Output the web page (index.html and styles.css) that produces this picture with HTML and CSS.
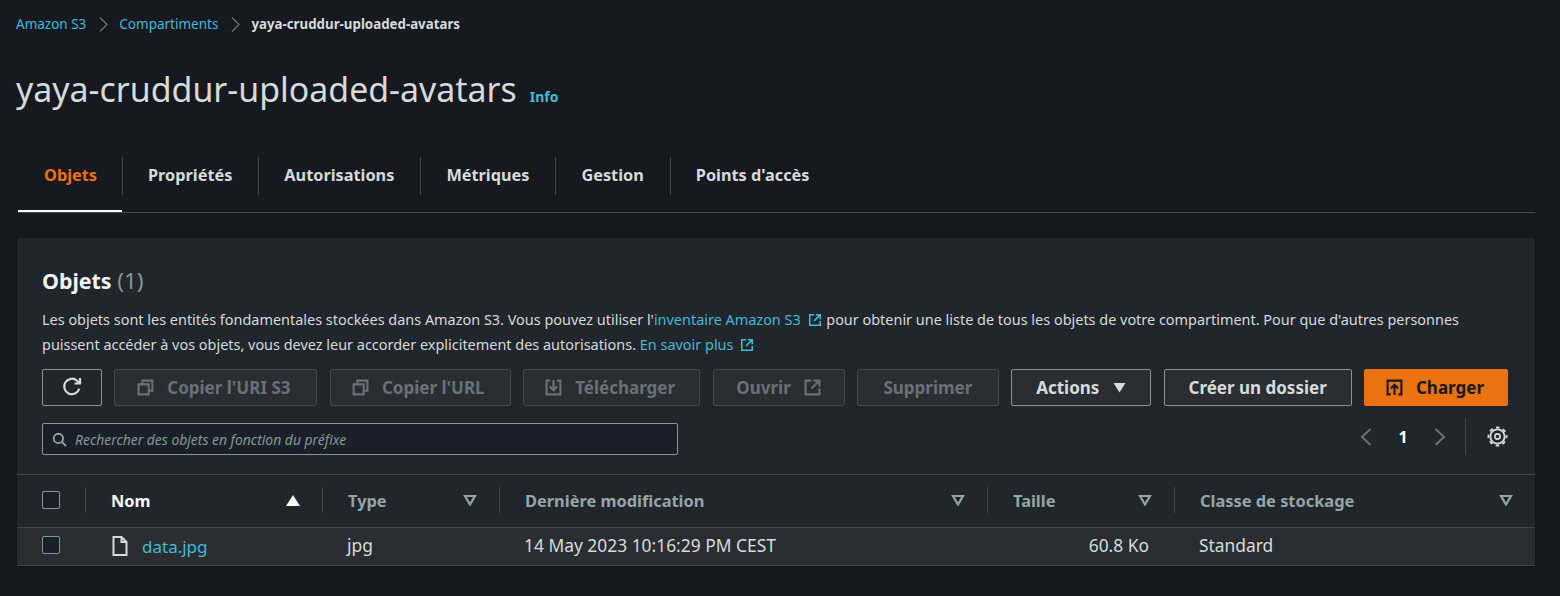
FILE: index.html
```html
<!DOCTYPE html>
<html lang="fr">
<head>
  <meta charset="utf-8" />
  <title>yaya-cruddur-uploaded-avatars</title>
  <link rel="stylesheet" href="styles.css">
</head>
<body>
  <nav class="crumbs">
    <a href="#">Amazon S3</a>
    <svg class="crumb-sep" viewBox="0 0 9 15"><path d="M1 .5l7 7-7 7"/></svg>
    <a href="#">Compartiments</a>
    <svg class="crumb-sep" viewBox="0 0 9 15"><path d="M1 .5l7 7-7 7"/></svg>
    <span class="crumb-current">yaya-cruddur-uploaded-avatars</span>
  </nav>

  <header class="page-head">
    <h1>yaya-cruddur-uploaded-avatars</h1>
    <a href="#" class="info">Info</a>
  </header>

  <ul class="tabs">
    <li class="tab tab-active"><span>Objets</span></li>
    <li class="tab"><span>Propriétés</span></li>
    <li class="tab"><span>Autorisations</span></li>
    <li class="tab"><span>Métriques</span></li>
    <li class="tab"><span>Gestion</span></li>
    <li class="tab"><span>Points d'accès</span></li>
  </ul>

  <section class="panel">
    <div class="panel-head">
      <h2>Objets <span class="count">(1)</span></h2>
      <p class="desc">Les objets sont les entités fondamentales stockées dans Amazon S3. Vous pouvez utiliser l'<a href="#">inventaire Amazon S3 <svg class="ext" viewBox="0 0 16 16"><path d="M7 2H2v12h12V9M9 2h5v5M14 2L7 9"/></svg></a> pour obtenir une liste de tous les objets de votre compartiment. Pour que d'autres personnes puissent accéder à vos objets, vous devez leur accorder explicitement des autorisations. <a href="#">En savoir plus <svg class="ext" viewBox="0 0 16 16"><path d="M7 2H2v12h12V9M9 2h5v5M14 2L7 9"/></svg></a></p>

      <div class="actions">
        <button class="btn btn-refresh"><svg class="ico" viewBox="0 0 20 20"><path d="M16.6 11.5A7 7 0 1 1 14.6 4.3L17 6.5M17.3 1.8v5h-5"/></svg></button>
        <button class="btn btn-uri" disabled><svg class="ico" viewBox="0 0 16 16"><path d="M5 5V1.500h9.500V11H11M1.500 5H11v9.500H1.500z"/></svg>Copier l'URI S3</button>
        <button class="btn btn-url" disabled><svg class="ico" viewBox="0 0 16 16"><path d="M5 5V1.500h9.500V11H11M1.500 5H11v9.500H1.500z"/></svg>Copier l'URL</button>
        <button class="btn btn-dl" disabled><svg class="ico" viewBox="0 0 16 16"><path d="M4.500 1.500h-3v13h13v-13h-3M8 1v9M4.500 7L8 10.500 11.500 7"/></svg>Télécharger</button>
        <button class="btn btn-open" disabled>Ouvrir<svg class="ico" viewBox="0 0 16 16"><path d="M7 1.500H1.500v13h13V9M9 1.500h5.500V7M14.500 1.500L7 9"/></svg></button>
        <button class="btn btn-del" disabled>Supprimer</button>
        <button class="btn btn-on btn-actions">Actions<svg class="caret" viewBox="0 0 14 12"><path d="M0.500 1h13L7 11.500z"/></svg></button>
        <button class="btn btn-on btn-folder">Créer un dossier</button>
        <button class="btn btn-primary"><svg class="ico" viewBox="0 0 16 16"><path d="M4.500 14.500h-3v-13h13v13h-3M8 15V6M4.500 9L8 5.500 11.500 9"/></svg>Charger</button>
      </div>

      <div class="filter-row">
        <div class="search">
          <svg class="search-ico" viewBox="0 0 16 16"><circle cx="6.800" cy="6.800" r="5"/><path d="M10.500 10.500L15 15"/></svg>
          <span>Rechercher des objets en fonction du préfixe</span>
        </div>
        <div class="pager">
          <svg class="pg-arrow" viewBox="0 0 12 20"><path d="M10.500 2L2 10l8.500 8"/></svg>
          <span class="pg-num">1</span>
          <svg class="pg-arrow" viewBox="0 0 12 20"><path d="M1.500 2L10 10l-8.500 8"/></svg>
          <span class="pg-div"></span>
          <svg class="gear" viewBox="0 0 20 20"><circle class="gear-teeth" cx="10" cy="10" r="8.600"/><circle class="gear-ring" cx="10" cy="10" r="6.800"/><circle class="gear-hub" cx="10" cy="10" r="2.500"/></svg>
        </div>
      </div>
    </div>

    <table class="objects">
      <colgroup>
        <col class="c-check"><col class="c-name"><col class="c-type"><col class="c-date"><col class="c-size"><col>
      </colgroup>
      <thead>
        <tr>
          <th><span class="th-in"><span class="check"></span></span></th>
          <th class="th-sorted"><span class="th-in"><span>Nom</span><svg class="sort" viewBox="0 0 14 11"><path d="M7 0l7 11H0z"/></svg></span></th>
          <th><span class="th-in"><span>Type</span><svg class="sort" viewBox="0 0 14 11"><path d="M2 1h10L7 9.500z"/></svg></span></th>
          <th><span class="th-in"><span>Dernière modification</span><svg class="sort" viewBox="0 0 14 11"><path d="M2 1h10L7 9.500z"/></svg></span></th>
          <th><span class="th-in"><span>Taille</span><svg class="sort" viewBox="0 0 14 11"><path d="M2 1h10L7 9.500z"/></svg></span></th>
          <th><span class="th-in"><span>Classe de stockage</span><svg class="sort" viewBox="0 0 14 11"><path d="M2 1h10L7 9.500z"/></svg></span></th>
        </tr>
      </thead>
      <tbody>
        <tr>
          <td><span class="check"></span></td>
          <td class="td-name"><svg class="file" viewBox="0 0 16 20"><path d="M1.500 1h8l5 5v13h-13zM9.500 1v5h5"/></svg><a href="#">data.jpg</a></td>
          <td>jpg</td>
          <td>14 May 2023 10:16:29 PM CEST</td>
          <td class="td-size">60.8 Ko</td>
          <td>Standard</td>
        </tr>
      </tbody>
    </table>
  </section>
</body>
</html>
```
FILE: styles.css
```css
body {
  margin: 0;
  height: 596px;
  overflow: hidden;
  padding: 0 25px 0 17px;
  box-sizing: border-box;
  background-color: #16191f;
  color: #d5dbdb;
  font-family: 'Noto Sans', sans-serif;
  font-size: 14px;
}
a {
  color: #44b9d6;
  text-decoration: none;
}
svg {
  fill: none;
  stroke: currentColor;
  stroke-width: 2;
}

/* breadcrumbs */
.crumbs {
  display: flex;
  align-items: center;
  height: 48px;
  margin-left: -1px;
  font-size: 13.500px;
}
.crumb-sep {
  width: 9px;
  height: 15px;
  margin: 0 11px 0 13px;
  color: #687078;
  stroke-width: 1.400;
}
.crumb-current {
  font-weight: 700;
  font-size: 13.300px;
}

/* title */
.page-head {
  display: flex;
  align-items: baseline;
  height: 109px;
  box-sizing: border-box;
  padding-top: 18px;
  margin-left: -1px;
}
h1 {
  margin: 0;
  font-size: 33.900px;
  font-weight: 400;
  line-height: 46px;
}
.info {
  margin-left: 13px;
  font-size: 14px;
  font-weight: 700;
}

/* tabs */
.tabs {
  display: flex;
  list-style: none;
  margin: 0 0 25px 1px;
  padding: 0;
  height: 55px;
  border-bottom: 1px solid #414750;
}
.tab {
  position: relative;
  padding: 0 26px;
  height: 55px;
  box-sizing: border-box;
  font-size: 16.300px;
  font-weight: 700;
  color: #d5dbdb;
}
.tab span {
  display: flex;
  align-items: center;
  height: 36px;
}
.tab + .tab::before {
  content: "";
  position: absolute;
  left: 0;
  top: 0;
  height: 38px;
  border-left: 1px solid #414750;
}
.tab-active {
  padding-right: 25px;
  color: #ec7211;
  border-bottom: 2px solid #fafafa;
}

/* panel */
.panel {
  background-color: #21252c;
  border-bottom: 1px solid #414750;
  box-shadow: 0 0 1px #000;
}
.panel-head {
  padding: 26px 27px 19px 25px;
}
h2 {
  margin: 0;
  font-size: 21.400px;
  line-height: 34px;
  font-weight: 700;
  color: #f2f3f3;
}
.count {
  font-size: 22.500px;
  font-weight: 400;
  color: #879596;
}
.desc {
  margin: 9px 0 12px;
  font-size: 14.450px;
  line-height: 25px;
}
.ext {
  width: 14px;
  height: 14px;
  vertical-align: -2px;
  stroke-width: 1.800;
  margin: 0 1px 0 3px;
}

/* toolbar */
.actions {
  display: flex;
  justify-content: space-between;
}
.btn {
  display: flex;
  align-items: center;
  justify-content: center;
  gap: 13px;
  height: 37px;
  padding: 0 0 1px;
  box-sizing: border-box;
  border-radius: 2px;
  border: 1px solid #414750;
  background-color: #2a2e33;
  color: #687078;
  font-family: inherit;
  font-size: 17px;
  font-weight: 700;
}
.ico {
  width: 17px;
  height: 17px;
}
.btn-refresh { width: 60px; border-color: #879596; color: #d5dbdb; background: transparent; }
.btn-refresh .ico { width: 22px; height: 22px; }
.btn-uri { width: 203px; padding-right: 4px; }
.btn-url { width: 181px; padding-right: 4px; }
.btn-dl { width: 177px; padding-right: 3px; }
.btn-open { width: 132px; }
.btn-del { width: 142px; }
.btn-on { border-color: #879596; color: #d5dbdb; }
.btn-actions { width: 140px; gap: 14px; }
.btn-folder { width: 188px; }
.btn-primary {
  width: 144px;
  padding-right: 2px;
  background-color: #ec7211;
  border-color: #ec7211;
  color: #16191f;
}
.caret {
  width: 13px;
  height: 11px;
  fill: currentColor;
  stroke: none;
}

/* search and pager */
.filter-row {
  display: flex;
  justify-content: space-between;
  align-items: flex-end;
  margin-top: 12px;
}
.search {
  display: flex;
  align-items: center;
  gap: 8px;
  width: 636px;
  height: 32px;
  padding-left: 9px;
  box-sizing: border-box;
  border: 1px solid #879596;
  border-radius: 2px;
  background-color: #1a2029;
  color: #879596;
  font-size: 13.900px;
  font-style: italic;
}
.search-ico {
  width: 15px;
  height: 15px;
  color: #95a5a6;
}
.pager {
  display: flex;
  align-items: center;
  height: 37px;
  color: #687078;
}
.pg-arrow {
  width: 12px;
  height: 20px;
}
.pg-num {
  width: 62px;
  text-align: center;
  color: #fafafa;
  font-weight: 700;
  font-size: 16px;
}
.pg-div {
  height: 37px;
  margin: 0 21px 0 19px;
  border-left: 1px solid #414750;
}
.gear {
  width: 21px;
  height: 21px;
  color: #d5dbdb;
}
.gear-teeth {
  stroke-width: 1.800;
  stroke-dasharray: 3.400 3.354;
  stroke-dashoffset: 1.700;
}
.gear-ring {
  stroke-width: 1.800;
}
.gear-hub {
  stroke-width: 1.600;
}

/* table */
.objects {
  width: 100%;
  table-layout: fixed;
  border-collapse: collapse;
}
.c-check { width: 68px; }
.c-name { width: 237px; }
.c-type { width: 177px; }
.c-date { width: 488px; }
.c-size { width: 187px; }
.objects th {
  height: 53px;
  padding: 0 0 2px;
  border-top: 1px solid #414750;
  border-bottom: 1px solid #414750;
  box-sizing: border-box;
  font-size: 16.400px;
  font-weight: 700;
  color: #95a5a6;
  text-align: left;
}
.th-in {
  display: flex;
  align-items: center;
  justify-content: space-between;
  height: 26px;
  padding: 0 22px 0 25px;
  border-left: 1px solid #414750;
}
.objects th:first-child .th-in {
  border-left: 0;
  padding-left: 25px;
}
.objects th.th-sorted {
  color: #fafafa;
}
.sort {
  width: 14px;
  height: 11px;
  stroke-width: 2.200;
}
.th-sorted .sort {
  fill: currentColor;
  stroke: none;
}
.objects td {
  height: 37px;
  padding: 0 0 3px 25px;
  box-sizing: border-box;
  background-color: #2a2e33;
  font-size: 17.400px;
}
.objects td.td-name {
  padding-left: 27px;
  white-space: nowrap;
}
.td-name a {
  vertical-align: middle;
  font-size: 17px;
}
.file {
  width: 16px;
  height: 20px;
  margin-right: 14px;
  vertical-align: middle;
}
.objects td.td-size {
  text-align: right;
  padding-right: 25px;
}
.check {
  display: block;
  width: 16px;
  height: 16px;
  border: 1px solid #879596;
  border-radius: 2px;
  background-color: #1a2029;
}
```
